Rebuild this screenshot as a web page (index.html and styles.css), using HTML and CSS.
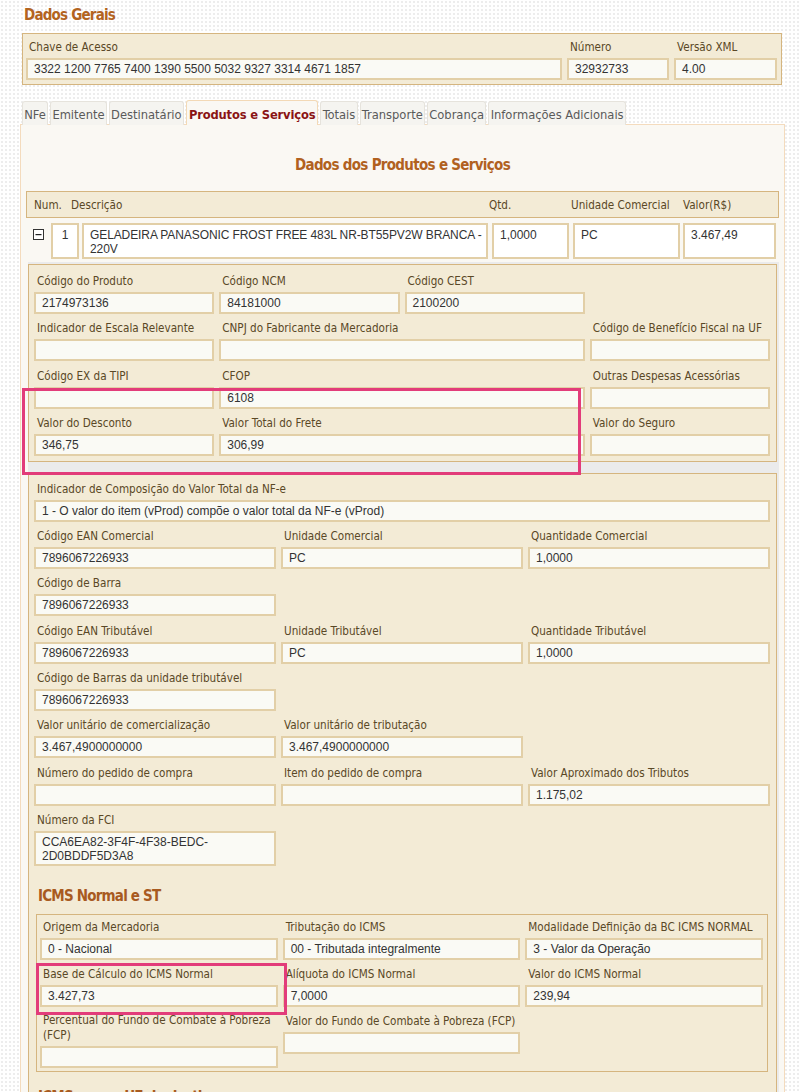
FILE: index.html
```html
<!DOCTYPE html>
<html lang="pt-BR">
<head>
<meta charset="utf-8">
<title>NF-e - Produtos e Serviços</title>
<link rel="stylesheet" href="styles.css">
</head>
<body>
<div class="page">
  <h2 class="title">Dados Gerais</h2>
  <div class="box general">
    <div class="field"><label>Chave de Acesso</label><div class="inp">3322 1200 7765 7400 1390 5500 5032 9327 3314 4671 1857</div></div>
    <div class="field"><label>Número</label><div class="inp">32932733</div></div>
    <div class="field"><label>Versão XML</label><div class="inp">4.00</div></div>
  </div>

  <ul class="tabs">
    <li class="tab">NFe</li>
    <li class="tab">Emitente</li>
    <li class="tab">Destinatário</li>
    <li class="tab active">Produtos e Serviços</li>
    <li class="tab">Totais</li>
    <li class="tab">Transporte</li>
    <li class="tab">Cobrança</li>
    <li class="tab">Informações Adicionais</li>
  </ul>

  <div class="panel">
    <h3 class="section-title">Dados dos Produtos e Serviços</h3>

    <div class="prod-head">
      <span class="h-num">Num.</span>
      <span class="h-desc">Descrição</span>
      <span class="h-qtd">Qtd.</span>
      <span class="h-un">Unidade Comercial</span>
      <span class="h-val">Valor(R$)</span>
    </div>

    <div class="prod-row">
      <span class="toggle"><svg width="11" height="11" viewBox="0 0 11 11"><rect x="0.5" y="0.5" width="10" height="10" fill="#fff" stroke="#333"/><rect x="2.5" y="5" width="6" height="1.2" fill="#222"/></svg></span>
      <div class="cell c-num">1</div>
      <div class="cell c-desc">GELADEIRA PANASONIC FROST FREE 483L NR-BT55PV2W BRANCA - 220V</div>
      <div class="cell c-qtd">1,0000</div>
      <div class="cell c-un">PC</div>
      <div class="cell c-val">3.467,49</div>
    </div>

    <div class="details">
      <div class="box grid4">
        <div class="field"><label>Código do Produto</label><div class="inp">2174973136</div></div>
        <div class="field"><label>Código NCM</label><div class="inp">84181000</div></div>
        <div class="field"><label>Código CEST</label><div class="inp">2100200</div></div>
        <div class="field empty"></div>

        <div class="field"><label>Indicador de Escala Relevante</label><div class="inp"></div></div>
        <div class="field span2"><label>CNPJ do Fabricante da Mercadoria</label><div class="inp"></div></div>
        <div class="field"><label>Código de Benefício Fiscal na UF</label><div class="inp"></div></div>

        <div class="field"><label>Código EX da TIPI</label><div class="inp"></div></div>
        <div class="field span2"><label>CFOP</label><div class="inp">6108</div></div>
        <div class="field"><label>Outras Despesas Acessórias</label><div class="inp"></div></div>

        <div class="field"><label>Valor do Desconto</label><div class="inp">346,75</div></div>
        <div class="field span2"><label>Valor Total do Frete</label><div class="inp">306,99</div></div>
        <div class="field"><label>Valor do Seguro</label><div class="inp"></div></div>
      </div>

      <div class="box second">
        <div class="grid3">
          <div class="field span3"><label>Indicador de Composição do Valor Total da NF-e</label><div class="inp">1 - O valor do item (vProd) compõe o valor total da NF-e (vProd)</div></div>

          <div class="field"><label>Código EAN Comercial</label><div class="inp">7896067226933</div></div>
          <div class="field"><label>Unidade Comercial</label><div class="inp">PC</div></div>
          <div class="field"><label>Quantidade Comercial</label><div class="inp">1,0000</div></div>

          <div class="field"><label>Código de Barra</label><div class="inp">7896067226933</div></div>
          <div class="field empty"></div>
          <div class="field empty"></div>

          <div class="field"><label>Código EAN Tributável</label><div class="inp">7896067226933</div></div>
          <div class="field"><label>Unidade Tributável</label><div class="inp">PC</div></div>
          <div class="field"><label>Quantidade Tributável</label><div class="inp">1,0000</div></div>

          <div class="field"><label>Código de Barras da unidade tributável</label><div class="inp">7896067226933</div></div>
          <div class="field empty"></div>
          <div class="field empty"></div>

          <div class="field"><label>Valor unitário de comercialização</label><div class="inp">3.467,4900000000</div></div>
          <div class="field"><label>Valor unitário de tributação</label><div class="inp">3.467,4900000000</div></div>
          <div class="field empty"></div>

          <div class="field"><label>Número do pedido de compra</label><div class="inp"></div></div>
          <div class="field"><label>Item do pedido de compra</label><div class="inp"></div></div>
          <div class="field"><label>Valor Aproximado dos Tributos</label><div class="inp">1.175,02</div></div>

          <div class="field"><label>Número da FCI</label><div class="inp multi">CCA6EA82-3F4F-4F38-BEDC-<br>2D0BDDF5D3A8</div></div>
        </div>

        <h4 class="sub-title">ICMS Normal e ST</h4>
        <div class="box icms grid3">
          <div class="field"><label>Origem da Mercadoria</label><div class="inp">0 - Nacional</div></div>
          <div class="field"><label>Tributação do ICMS</label><div class="inp">00 - Tributada integralmente</div></div>
          <div class="field"><label>Modalidade Definição da BC ICMS NORMAL</label><div class="inp">3 - Valor da Operação</div></div>

          <div class="field"><label>Base de Cálculo do ICMS Normal</label><div class="inp">3.427,73</div></div>
          <div class="field"><label>Alíquota do ICMS Normal</label><div class="inp">7,0000</div></div>
          <div class="field"><label>Valor do ICMS Normal</label><div class="inp">239,94</div></div>

          <div class="field"><label class="wrap">Percentual do Fundo de Combate à Pobreza (FCP)</label><div class="inp"></div></div>
          <div class="field"><label>Valor do Fundo de Combate à Pobreza (FCP)</label><div class="inp"></div></div>
        </div>

        <h4 class="sub-title next">ICMS para a UF de destino</h4>
      </div>
    </div>
  </div>

  <div class="mark mark1"></div>
  <div class="mark mark2"></div>
</div>
</body>
</html>
```

FILE: styles.css
```css
* { box-sizing: border-box; }

html, body { margin: 0; padding: 0; }

body {
  background-color: #ffffff;
  background-image: radial-gradient(circle, #ededed 0.8px, transparent 1.2px);
  background-size: 4px 4px;
  font-family: "DejaVu Sans Condensed", "DejaVu Sans", sans-serif;
  font-stretch: condensed;
  color: #5c4a2a;
  height: 1092px;
  overflow: hidden;
}

.page {
  position: relative;
  width: 800px;
  height: 1092px;
  overflow: hidden;
  padding: 5px 15px 0 20px;
}

.title {
  margin: 0 0 8px 4px;
  font-size: 15px;
  letter-spacing: -0.8px;
  line-height: 20px;
  font-weight: bold;
  color: #b3641f;
}

.box {
  background: #f3ebd6;
  border: 1px solid #d5b57f;
}

.general {
  margin-left: 2px;
  width: 760px;
  display: grid;
  grid-template-columns: 536px 102px 103px;
  column-gap: 5px;
  padding: 5px 4px 4px 3px;
}

.field { display: flex; flex-direction: column; min-width: 0; }
.field label {
  display: block;
  font-size: 11.6px;
  line-height: 16px;
  margin: 0 0 3px 3px;
  color: #5a4826;
  white-space: nowrap;
}

.inp {
  height: 22px;
  background: #fafaf5;
  border: 2px solid #e2cfa7;
  font-family: "Liberation Sans", Arial, sans-serif;
  font-stretch: normal;
  font-size: 12px;
  line-height: 18px;
  color: #333;
  padding: 0 6px;
  white-space: nowrap;
  overflow: hidden;
}
.inp.multi {
  height: 35px;
  padding-top: 2px;
  line-height: 14px;
  white-space: normal;
}

/* tabs */
.tabs {
  list-style: none;
  margin: 15px 0 -1px 2px;
  padding: 0;
  display: flex;
  gap: 2px;
  align-items: flex-end;
  position: relative;
  z-index: 1;
}
.tab {
  height: 24px;
  padding: 0 1.25px;
  font-size: 12.8px;
  line-height: 26px;
  color: #5a5a5a;
  background: #f5f4f0;
  border: 1px solid #e6e3dc;
  border-bottom: none;
  border-radius: 3px 3px 0 0;
  white-space: nowrap;
}
.tab.active {
  height: 25px;
  line-height: 28px;
  padding: 0 2px;
  font-weight: bold;
  letter-spacing: -0.15px;
  color: #8a1414;
  background: #faf8f3;
  border-color: #f3d9b6;
}

/* panel */
.panel {
  width: 765px;
  background: #faf8f3;
  border: 1px solid #f4dbbd;
  padding: 0 5px;
  height: 990px;
}

.section-title {
  margin: 30px 0 16px;
  text-align: center;
  font-size: 15px;
  letter-spacing: -0.7px;
  line-height: 20px;
  font-weight: bold;
  color: #b1611f;
}

.prod-head {
  height: 27px;
  background: #f3ebd6;
  border: 1px solid #d5b57f;
  display: flex;
  align-items: center;
  padding-left: 7px;
  font-size: 11.6px;
  color: #5a4826;
  white-space: nowrap;
}
.h-num { width: 37px; }
.h-desc { width: 418px; }
.h-qtd { width: 82px; }
.h-un { width: 112px; }

.prod-row {
  display: flex;
  align-items: flex-start;
  margin-top: 5px;
  padding-left: 7px;
  height: 36px;
}
.toggle { width: 11px; height: 11px; margin-top: 6px; display: block; }
.toggle svg { display: block; }
.cell {
  height: 36px;
  background: #fff;
  border: 2px solid #e2cfa7;
  font-family: "Liberation Sans", Arial, sans-serif;
  font-stretch: normal;
  font-size: 12px;
  line-height: 14px;
  color: #333;
  padding: 3px 6px 0;
}
.c-num { width: 28px; margin-left: 7px; text-align: center; padding: 3px 0 0; }
.c-desc { width: 406px; margin-left: 3px; padding-right: 0; letter-spacing: -0.1px; }
.c-qtd { width: 77px; margin-left: 4px; }
.c-un { width: 107px; margin-left: 4px; }
.c-val { width: 93px; margin-left: 3px; }

/* details */
.details {
  margin: 3px 0 0 2px;
  width: 751px;
  background: #ebebeb;
  padding: 2px 2px 11px 0;
}

.grid4 {
  display: grid;
  grid-template-columns: repeat(4, 1fr);
  column-gap: 5px;
  row-gap: 6.3px;
  padding: 8px 6px 5px 5px;
}
.span2 { grid-column: span 2; }
.span3 { grid-column: span 3; }

.second {
  margin-top: 11px;
  padding: 7px 6px 20px 5px;
}
.grid3 {
  display: grid;
  grid-template-columns: repeat(3, 1fr);
  column-gap: 5px;
  row-gap: 6.3px;
  align-items: start;
}

.sub-title {
  margin: 20px 0 8px 4px;
  font-size: 15px;
  letter-spacing: -0.8px;
  line-height: 20px;
  font-weight: bold;
  color: #a85a1f;
}
.sub-title.next { margin-top: 15px; }

.icms {
  margin: 0 2px;
  padding: 4px 4px 3px 3px;
  row-gap: 6px;
}
.icms .field label.wrap { white-space: normal; line-height: 15px; margin-top: 0.5px; }

/* highlight marks */
.mark {
  position: absolute;
  border: 3px solid #e23c7a;
  pointer-events: none;
}
.mark1 { left: 22px; top: 388px; width: 559px; height: 87px; }
.mark2 { left: 36px; top: 963px; width: 251px; height: 52px; }
```
